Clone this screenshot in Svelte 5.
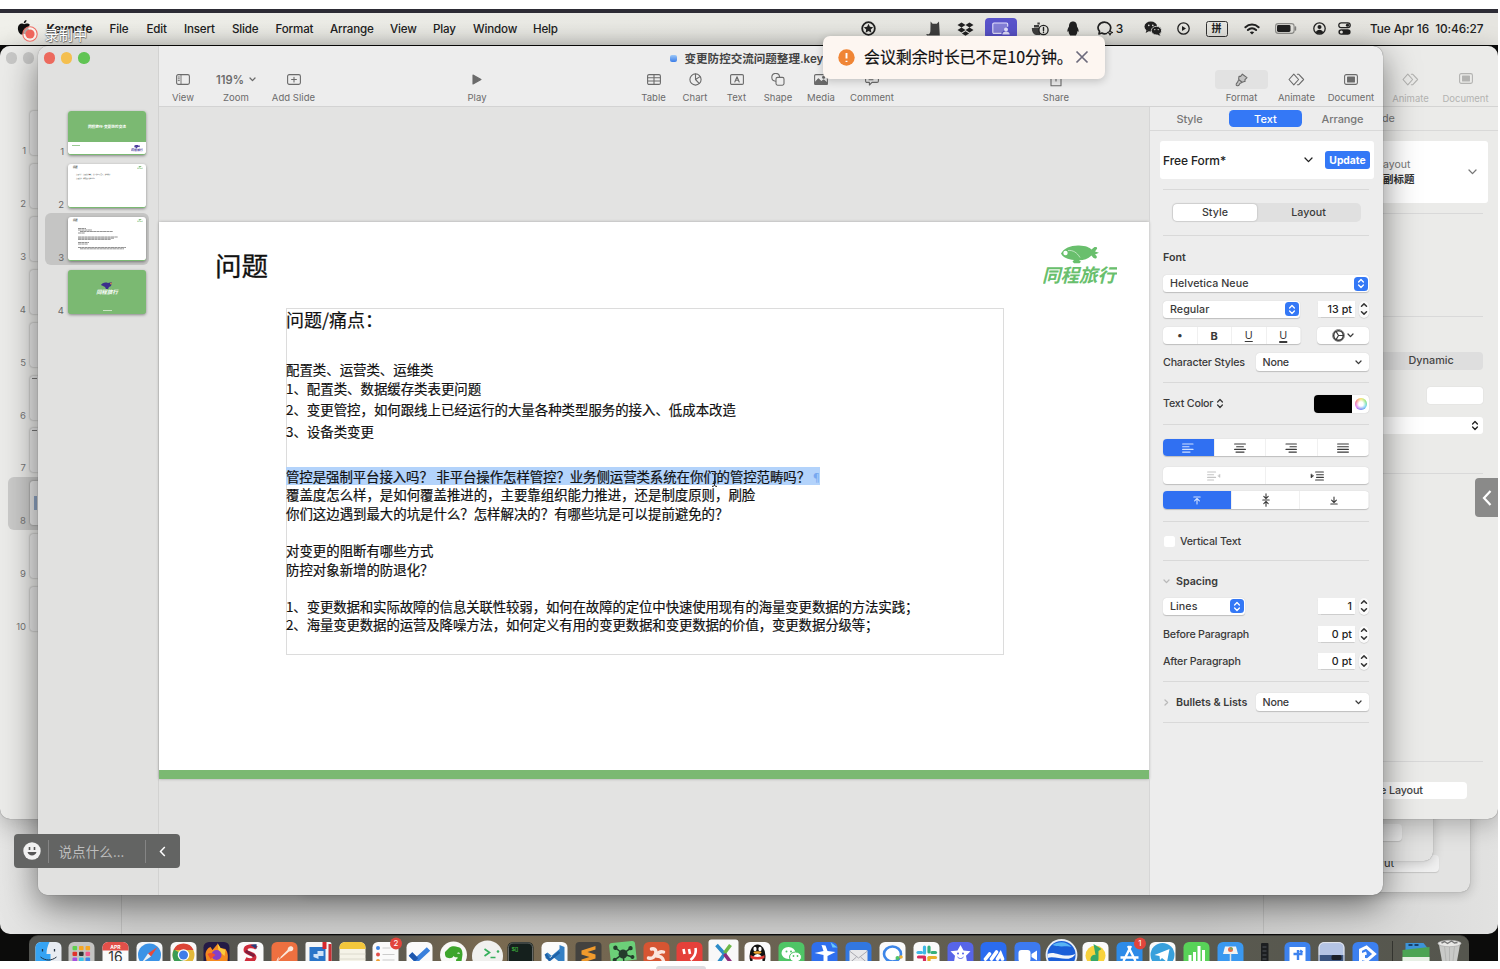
<script>
  const menus = ['Keynote', 'File', 'Edit', 'Insert', 'Slide', 'Format', 'Arrange', 'View', 'Play', 'Window', 'Help'];

  const ic = (w, h, body) =>
    `<svg width="${w}" height="${h}" viewBox="0 0 ${w} ${h}" fill="none" stroke="currentColor" stroke-width="1.1" stroke-linecap="round" stroke-linejoin="round" style="display:block">${body}</svg>`;

  const g = {
    view: ic(14, 11, '<rect x=".6" y=".6" width="12.8" height="9.8" rx="1.6"/><path d="M5 .8v9.4M2.2 3h1.2M2.2 4.8h1.2M2.2 6.6h1.2" stroke-width=".9"/>'),
    add: ic(14, 11, '<rect x=".6" y=".6" width="12.8" height="9.8" rx="1.6"/><path d="M7 3.2v4.8M4.6 5.5h4.8"/>'),
    play: ic(10, 11, '<path d="M1 1l8 4.5L1 10z" fill="currentColor"/>'),
    table: ic(14, 11, '<rect x=".6" y=".6" width="12.8" height="9.8" rx="1.4"/><path d="M.8 3.8h12.4M.8 7h12.4M7 .8v9.4"/>'),
    chart: ic(13, 13, '<circle cx="6.5" cy="6.5" r="5.6"/><path d="M6.5 1v5.5l3.6 3.8M6.5 6.5L11 3.6"/>'),
    text: ic(14, 11, '<rect x=".6" y=".6" width="12.8" height="9.8" rx="1.2"/><path d="M4.8 8L7 2.8 9.2 8M5.6 6.3h2.8"/>'),
    shape: ic(14, 13, '<path d="M4.6 8.2A3.9 3.9 0 1 1 8.6 4"/><rect x="5" y="4.4" width="8" height="7.8" rx="1.6"/>'),
    media: ic(14, 11, '<rect x=".6" y=".6" width="12.8" height="9.8" rx="1.2"/><path d="M1 8.6l3.4-3.8 3 3L9.600 6l3.600 3v1.200H1z" fill="currentColor"/><circle cx="9.600" cy="3.300" r="1" fill="currentColor"/>'),
    comment: ic(14, 12, '<path d="M2 .6h10a1.400 1.400 0 0 1 1.400 1.400v5A1.400 1.400 0 0 1 12 8.400H7L4.400 11V8.400H2A1.400 1.400 0 0 1 .6 7V2A1.400 1.400 0 0 1 2 .6zM4 3.600h6M4 5.800h4"/>'),
    share: ic(12, 14, '<path d="M3.600 5H1v7.800h10V5H8.400M6 8V1M3.800 3L6 1l2.200 2"/>'),
    format: ic(13, 14, '<path d="M7.400 1.200l4.600 3.400-2.200 2.200.4 1.400-3 1-3.600-2.800.4-3.200 1.600.2zM3.800 6.800l3.200 2.600M3.200 7.600C2.800 9.800.8 10.400 1.200 12c.6 1.400 2.800.8 3.200-.6.2-1 1-1.400 2-1.600" fill="#00000022"/>'),
    animate: ic(17, 13, '<path d="M5.800 1.200L1 6.500l4.800 5.300 4.800-5.300z"/><path d="M9.400 1.200h1.200l5 5.300-5 5.300H9.400" />'),
    document: ic(14, 11, '<rect x=".6" y=".6" width="12.8" height="9.8" rx="1.6"/><rect x="3.600" y="3" width="6.800" height="5" fill="currentColor"/>')
  };

  const tools = [
    ['view', 'View'], ['zoom', 'Zoom'], ['add', 'Add Slide'], ['play', 'Play'], ['table', 'Table'], ['chart', 'Chart'],
    ['text', 'Text'], ['shape', 'Shape'], ['media', 'Media'], ['comment', 'Comment'], ['share', 'Share'],
    ['format', 'Format'], ['animate', 'Animate'], ['document', 'Document']
  ];

  const chev = ic(9, 6, '<path d="M1 1l3.500 3.600L8 1" stroke-width="1.300"/>');
  const chevS = ic(7, 5, '<path d="M1 1l2.500 2.600L6 1" stroke-width="1.300"/>');
  const updown = ic(8, 11, '<path d="M1.600 4L4 1.500 6.400 4M1.600 7L4 9.500 6.400 7" stroke-width="1.300"/>');
  const stepIc = ic(8, 14, '<path d="M1.500 4.200L4 1.900l2.500 2.300M1.500 9.800L4 12.100l2.500-2.300" stroke-width="1.500"/>');

  const lines = (rows) => ic(12, 10, rows.map(([a, b], i) => `<path d="M${a} ${1 + i * 2.7}H${b}"/>`).join(''));
  const aligns = [
    lines([[0.6, 11], [0.6, 7], [0.6, 11], [0.6, 8]]),
    lines([[0.6, 11.4], [2.6, 9.4], [0.6, 11.4], [2, 10]]),
    lines([[1, 11.4], [5, 11.4], [1, 11.4], [4, 11.4]]),
    lines([[0.6, 11.4], [0.6, 11.4], [0.6, 11.4], [0.6, 11.4]])
  ];
  const outdent = ic(14, 10, '<path d="M.6 1h8M.6 3.700h6M.6 6.400h8M.6 9h6"/><path d="M13 3.500v3l-2-1.500z" fill="currentColor" stroke-width=".5"/>');
  const indent = ic(14, 10, '<path d="M5.600 1h7.800M6.600 3.700h6.800M6.600 6.400h6.800M5.600 9h7.800"/><path d="M1 3.300v3.600L3.400 5z" fill="currentColor" stroke-width=".6"/>');
  const vTop = ic(8, 9, '<path d="M.8 1h6.400M4 8V2.600M1.600 4.800L4 2.500l2.400 2.300"/>');
  const vMid = ic(8, 14, '<path d="M.8 7h6.400M4 .8v4.700M4 13.200V8.500M1.800 3.400L4 5.600l2.200-2.200M1.800 10.600L4 8.400l2.200 2.200"/>');
  const vBot = ic(8, 9, '<path d="M.8 8h6.400M4 1v5.400M1.600 4.200L4 6.500l2.400-2.300"/>');

  const F = 'fill="currentColor" stroke="none"';
  const status = [
    ic(15, 15, `<circle cx="7.500" cy="7.500" r="6.300" stroke-width="1.800"/><path d="M7.500 2.800l1.400 3 3.300.4-2.400 2.200.6 3.300-2.900-1.600-2.900 1.600.6-3.300L2.800 6.200l3.300-.4z" ${F}/>`),
    '',
    ic(15, 15, `<path d="M4.600.4l2 2.400h4.200L13 .4l.8 14.200H1L.2 13l2.600.2c1.400-1 1.600-2.400 1.600-4z" ${F} opacity=".85"/>`),
    ic(17, 14, `<path d="M4.500.5l4 2.500-4 2.500-4-2.500zM12.500.5l4 2.500-4 2.500-4-2.500zM4.500 5.600l4 2.500-4 2.500-4-2.500zM12.500 5.600l4 2.500-4 2.500-4-2.500zM8.500 9.200l3.600 2.300-3.600 2.200-3.600-2.200z" ${F}/>`),
    '<span class="sharing">' + ic(18, 13, `<path d="M9 11.400H2a1.200 1.200 0 0 1-1.200-1.200V2.200A1.200 1.200 0 0 1 2 1h12.500A1.200 1.200 0 0 1 15.700 2.200v2" fill="#ffffff44"/><circle cx="14" cy="7.500" r="2" ${F}/><path d="M10.300 12.600c0-4 7.400-4 7.400 0z" ${F}/>`) + '</span>',
    ic(18, 15, `<path d="M.8 7h8.500v7H5C2.400 13.500.8 11 .8 7zM3 4h5v2.400H3zM6.400 1.500h2.400v2H6.400z" ${F} opacity=".85"/><circle cx="12.500" cy="9" r="4.600" fill="#e9e9e4" stroke-width="1.300"/><path d="M12.500 6.500v3M12.500 11.300v.2" stroke-width="1.400"/>`),
    ic(12, 15, `<path d="M6 .6c3 0 4 2.200 4 4.800 1 1.600 1.800 3.400 1.600 5-.5.6-.9.2-1.300-.6.2 1.800-.3 3-1.500 4.600H3.200C2 12.800 1.500 11.600 1.700 9.800c-.4.8-.8 1.200-1.300.6C.2 8.800 1 7 2 5.400 2 2.800 3 .6 6 .6z" ${F}/>`),
    ic(17, 15, '<path d="M9.500 12.500c-1 .3-3.300.3-4.600-.5L2 13l.5-2.700C-.8 6.500 2 1.200 7.400 1.200c4.400 0 7.200 3.600 6 7" stroke-width="1.700"/><path d="M13 9l.8 1.700 1.700.8-1.700.8L13 14l-.8-1.700-1.700-.8 1.700-.8z" stroke-width="1.200"/>') + '<b>3</b>',
    ic(18, 15, `<ellipse cx="6.800" cy="5.600" rx="6.300" ry="5" ${F}/><path d="M2.500 9l-.8 3 3-1.800z" ${F}/><ellipse cx="12.500" cy="9.600" rx="5.200" ry="4.300" ${F} style="stroke:#e9e9e4;stroke-width:.8"/><path d="M15 12.500l1.500 2.200-3.500-1z" ${F}/><circle cx="4.800" cy="4.400" r=".8" fill="#e9e9e4" stroke="none"/><circle cx="8.800" cy="4.400" r=".8" fill="#e9e9e4" stroke="none"/><circle cx="10.800" cy="8.600" r=".7" fill="#e9e9e4" stroke="none"/><circle cx="14.200" cy="8.600" r=".7" fill="#e9e9e4" stroke="none"/>`),
    ic(13, 13, `<circle cx="6.500" cy="6.500" r="5.700" stroke-width="1.300"/><path d="M5 4l4 2.500L5 9z" ${F}/>`),
    '<span class="ime">拼</span>',
    ic(16, 12, `<path d="M1.400 4.300c3.800-3.600 9.400-3.600 13.200 0M3.900 7c2.400-2.200 5.800-2.200 8.200 0" stroke-width="2"/><path d="M8 11.600L5.800 9.200c1.300-1.100 3.100-1.100 4.400 0z" ${F}/>`),
    ic(22, 11, `<rect x=".6" y=".6" width="18.500" height="9.800" rx="2.600" opacity=".45"/><rect x="2" y="2" width="13.500" height="7" rx="1.400" ${F}/><path d="M20.500 4v3" stroke-width="1.400" opacity=".5"/>`),
    ic(13, 13, `<circle cx="6.500" cy="6.500" r="5.700" stroke-width="1.300"/><circle cx="6.500" cy="4.900" r="2" ${F}/><path d="M2.800 10.200c1-3.400 6.400-3.400 7.400 0-2 2-5.400 2-7.400 0z" ${F}/>`),
    ic(13, 13, `<rect x=".8" y=".8" width="11.400" height="4.800" rx="2.400" stroke-width="1.300"/><circle cx="9.500" cy="3.200" r="1.600" ${F}/><rect x=".4" y="7.200" width="12.200" height="5.600" rx="2.800" ${F}/><circle cx="3.400" cy="10" r="1.500" fill="#e9e9e4" stroke="none"/>`)
  ];

  const dk = (bg, body, r = 5.500) =>
    `<svg width="33" height="25" viewBox="-3.500 -6 33 25" style="display:block"><rect width="26" height="30" rx="${r}" fill="${bg}"/>${body}</svg>`;
  const badge = (n) => `<circle cx="23.500" cy="1.500" r="6" fill="#e2453c"/><text x="23.500" y="4.300" font-size="8" fill="#fff" text-anchor="middle">${n}</text>`;
  const dots = (cs) => cs.map((c, i) => `<rect x="${4 + (i % 3) * 6.500}" y="${4 + Math.floor(i / 3) * 5.800}" width="4.600" height="4.200" rx="1" fill="${c}"/>`).join('');
  const dock = [
    dk('#e8ecf2', '<path d="M5.500 0H14c-2 4-3 8-3 12h4v8H0V5.500A5.500 5.500 0 0 1 5.500 0z" fill="#35a3f3"/><path d="M7 7v2.500M19 7v2.500" stroke="#234" stroke-width="1.300"/><path d="M5 15c5 4 11 4 16 0" stroke="#234" fill="none"/>'),
    dk('#c4c4c2', dots(['#5fd04e', '#f5a623', '#f5a623', '#e0332c', '#333', '#f05a8c', '#a64fe0', '#3cc4e8', '#3c86e8'])),
    dk('#fafafa', '<path d="M0 8.500V5.500A5.500 5.500 0 0 1 5.500 0h15A5.500 5.500 0 0 1 26 5.500v3z" fill="#e2504a"/><text x="13" y="6.800" font-size="5" font-weight="700" fill="#fff" text-anchor="middle">APR</text><text x="13" y="20" font-size="14" fill="#333" text-anchor="middle">16</text>'),
    dk('#f4f6f8', '<circle cx="13" cy="13" r="11.500" fill="#3b93e6"/><path d="M21 5l-6.500 9.500-3-3z" fill="#e84a3c"/><path d="M5 21l6.500-9.500 3 3z" fill="#e8eef4"/>'),
    dk('#f8f8f8', '<circle cx="13" cy="13" r="11" fill="#e2b93a"/><path d="M3 8a11 11 0 0 1 20 0z" fill="#dc4437"/><path d="M3.500 7.500L13 13v11A11 11 0 0 1 3.500 7.500z" fill="#3b9c54"/><circle cx="13" cy="13" r="5.800" fill="#fff"/><circle cx="13" cy="13" r="4.500" fill="#3f7de8"/>'),
    dk('#241a45', '<path d="M2 13C2 9 4 6 7 5l2 3 5-6 3 4 5 1c2 3 3 6 2 12H3z" fill="#f58a20"/><path d="M14 1l3 5 5 2-1 6-6-5z" fill="#fccb3c"/><circle cx="13" cy="13" r="5" fill="#8440c8"/><path d="M4 12c3-2 6-1 8 1l-5 4z" fill="#f0502c"/>'),
    dk('#fafafa', '<path d="M19 6c-4-3-11-2-11 2s9 3 9 7-5 4-9 2" fill="none" stroke="#cf2b3a" stroke-width="4"/><path d="M13 3l6-1v5z" fill="#28407c"/><path d="M8 9l9 5" stroke="#7c1d3c" stroke-width="3"/>'),
    dk('#ee7040', '<path d="M20.500 4.500c2 1 1.500 3.500 0 4.500l-3 .5L10 16l-1-1 7-7 .5-2c1-1.500 2.500-2 4-1.500z" fill="#fbe8dc"/><path d="M10 15l-5 5M7 15.500L5 20" stroke="#fbe8dc"/>'),
    dk('#f5f5f5', '<rect x="4" y="5" width="16" height="15" fill="#2a74c8"/><rect x="17" y="0" width="4" height="7" fill="#d8282c"/><rect x="23" y="2" width="3" height="18" fill="#c83034"/><path d="M8 15v-3h4V9h6v5h-5v3z" fill="#cfe2f8"/>', 2),
    dk('#f5f3e8', '<path d="M0 7V5.500A5.500 5.500 0 0 1 5.500 0h15A5.500 5.500 0 0 1 26 5.500V7z" fill="#f3c73c"/><path d="M0 12h26M0 17h26" stroke="#d6d3c6" stroke-width=".8"/>'),
    dk('#fafafa', '<circle cx="5.500" cy="6" r="2" fill="#3c84e6"/><circle cx="5.500" cy="12.500" r="2" fill="#e2504a"/><circle cx="5.500" cy="19" r="2" fill="#f0a030"/><path d="M10 6h8M10 12.500h12M10 18h12" stroke="#ccc"/>' + badge(2)),
    dk('#fafafa', '<path d="M4 12l6 6L22 7" stroke="#3a80dc" stroke-width="5" fill="none"/><path d="M4 12l6 6" stroke="#1f57ac" stroke-width="5"/>'),
    `<svg width="33" height="25" viewBox="-3.500 -6 33 25" style="display:block"><circle cx="13" cy="13" r="13.500" fill="#f8f8f6"/><path d="M4.500 10L9 5.500c2-1.500 6-1.500 8-.5 4 .5 5 3.500 5 7.500l-1 7h-4c-2 0-2-2.500 0-3v-1.500c-1 .5-3 .5-4-1-1 3-6 2.500-7.500 1C4.500 14 4.300 12 4.500 10z" fill="#3da52c"/><path d="M16.500 11.500c.5-1.500 2.500-1.500 3 .3z" fill="#fff"/></svg>`,
    `<svg width="33" height="25" viewBox="-3.500 -6 33 25" style="display:block"><circle cx="13" cy="14" r="15.500" fill="#f0f0ee"/><path d="M10 7l5 3.500-5 3.500M16 15.500h5" stroke="#36b05c" stroke-width="1.700" fill="none"/><circle cx="23.500" cy="9.500" r="1.300" fill="#36b05c"/></svg>`,
    dk('#15201d', '<rect x="1" y="1" width="24" height="26" rx="4.500" fill="none" stroke="#888" stroke-width=".7"/><text x="4" y="9" font-size="6" font-weight="700" fill="#3cae3c" font-family="Liberation Mono">$▯</text>'),
    dk('#fafafa', '<path d="M18 3l5 2v15h-5L6 10.500 4 12v4l2 1.500L18 7z" fill="#3580c4"/><path d="M4 12l4 6 10-8" stroke="#1e62a8" stroke-width="2.500" fill="none"/>'),
    dk('#43423f', '<path d="M20 4L6 8.500v4l8 2.500-8 2.500V21l14-4.500v-4L12 10l8-2.500z" fill="#f09a2c"/>', 4),
    dk('#6ccf78', '<path d="M13 12L6 5M13 12l8-5M13 12L4 17M13 12l9 4M13 12v8" stroke="#243c2c" stroke-width="1.500"/><circle cx="13" cy="12" r="4.500" fill="#243c2c"/><circle cx="6" cy="5" r="2.200" fill="#243c2c"/><circle cx="21" cy="7" r="2.200" fill="#243c2c"/><circle cx="4" cy="17" r="2" fill="#243c2c"/><circle cx="22" cy="16" r="2" fill="#243c2c"/>', 3).replace('<svg ', '<svg class="tilt" '),
    dk('#d65532', '<path d="M8 7c4-1 5 2 4 5s-3 5-7 4M13 13c2-3 4-4 7-3M13 14c3 0 6 1 7 5" stroke="#fbe4dc" stroke-width="3.400" fill="none" stroke-linecap="round"/>'),
    dk('#e5403a', '<path d="M7 7l1 5M12.500 7l1 5M19 6c1 5-1 9-5 12" stroke="#fff" stroke-width="2.600" fill="none"/>'),
    `<svg width="33" height="25" viewBox="-3.500 -6 33 25" style="display:block"><rect x="-2" y="-2.500" width="30" height="32" rx="3" fill="#f8f8f8"/><path d="M6 3l8 9-7 10" stroke="#2d8cc8" stroke-width="3.600" fill="none"/><path d="M20 3l-6 8" stroke="#6cb848" stroke-width="3.600"/><path d="M14 12l6 8" stroke="#8c2c7c" stroke-width="3.600"/></svg>`,
    dk('#fafafa', '<ellipse cx="13" cy="14" rx="8" ry="11.500" fill="#111"/><ellipse cx="13" cy="18" rx="5" ry="6" fill="#fff"/><ellipse cx="10.500" cy="7" rx="1.600" ry="2.200" fill="#fff"/><ellipse cx="15.500" cy="7" rx="1.600" ry="2.200" fill="#fff"/><ellipse cx="13" cy="10.500" rx="4" ry="1.300" fill="#f4a72c"/><path d="M6 13c4 2.500 10 2.500 14 0v3c-4 2-10 2-14 0z" fill="#e23a34"/>'),
    dk('#4fc566', '<ellipse cx="10" cy="11" rx="7" ry="6" fill="#fff"/><ellipse cx="17" cy="15" rx="6" ry="5" fill="#fff" stroke="#4fc566"/><g fill="#4fc566"><circle cx="8" cy="9.500" r="1"/><circle cx="12.500" cy="9.500" r="1"/><circle cx="15" cy="14" r=".9"/><circle cx="19" cy="14" r=".9"/></g>'),
    dk('#2f6fee', '<path d="M10 3l4 .5 2 5.500 8 1-8 4v6h-4v-7l-9-2 9-2z" fill="#fff"/><path d="M19 0l7 5.500h-5z" fill="#6cc8f8"/>'),
    dk('#3277e0', '<rect x="4" y="8" width="18" height="14" rx="1.500" fill="#e8e8ea"/><path d="M4 9l9 7 9-7M4 21l7-6M22 21l-7-6" stroke="#a9a9b0" fill="none"/>'),
    dk('#fafafa', '<ellipse cx="13" cy="12" rx="8.500" ry="7.500" fill="#fff" stroke="#3d86e8" stroke-width="2.600"/><circle cx="18" cy="16" r="2" fill="#4fc566"/><circle cx="21.500" cy="15" r="1.800" fill="#f0b030"/>'),
    dk('#fafafa', '<g stroke-width="3.200" stroke-linecap="round"><path d="M11 5v6" stroke="#3cb8e8"/><path d="M4.500 10.500H8" stroke="#3cb8e8"/><path d="M15.500 5v5" stroke="#36b07c"/><path d="M18.500 10.500H22" stroke="#36b07c"/><path d="M5 15h6" stroke="#d82c5c"/><path d="M15.500 15.500H22" stroke="#e8b02c"/><path d="M11 16v5" stroke="#d82c5c"/><path d="M15.500 16v5" stroke="#e8b02c"/></g>'),
    dk('#5765e8', '<path d="M13 3l3 5.500 7 .8-4.500 4.500 1 6.200h-13l1-6.200L3 9.300l7-.8z" fill="#fff"/><circle cx="10.500" cy="11.500" r="1" fill="#5765e8"/><circle cx="15.500" cy="11.500" r="1" fill="#5765e8"/><path d="M10 15c2 2 4 2 6 0" stroke="#5765e8" fill="none"/>'),
    dk('#2b6cf0', '<path d="M5 17l4-5M11 17l5-7M17 17l3-5 2 5" stroke="#fff" stroke-width="3.600" fill="none" stroke-linecap="round"/>'),
    dk('#3d7af0', '<rect x="4" y="8" width="12" height="12" rx="3" fill="#fff"/><path d="M17 12l5.500-3.500v10L17 15z" fill="#fff"/>'),
    `<svg width="33" height="25" viewBox="-3.500 -6 33 25" style="display:block"><circle cx="13" cy="13" r="15" fill="#1b5fd8" stroke="#e8eef4" stroke-width="1.800"/><path d="M-1 12c8-4 14 5 28 0-6 10-20 1-28 4z" fill="#f2f6fa"/><path d="M4 3c6-4 14-4 19 2-5-2-10 1-19-2z" fill="#58b4f4"/></svg>`,
    dk('#fafafa', '<circle cx="13" cy="13.500" r="10" fill="#f8d23c"/><path d="M11 2l8 5-3 2v8a4 4 0 1 1-3-4z" fill="#36a868"/>'),
    dk('#2d8be8', '<path d="M14.500 4L7 19M11.500 4L19 19M4 15.500h18" stroke="#fff" stroke-width="2.400"/>' + badge(1)),
    dk('#fafafa', '<circle cx="13" cy="13" r="12" fill="#38a0dc"/><path d="M5 13l15-6-2.500 13-5-4-2 2-.5-4z" fill="#fff"/>'),
    dk('#58d258', '<path d="M6.500 13v8M11 10v10M15.500 4v16M20 8v12" stroke="#fff" stroke-width="3"/>'),
    dk('#3a98f0', '<path d="M7.500 4.500h11L20.500 12h-15z" fill="#f2f2f2"/><circle cx="13" cy="7.500" r="2.500" fill="#e86c4c"/><path d="M13 7.500V5a2.500 2.500 0 0 1 2.400 2.500z" fill="#5cb85c"/><path d="M13 11.500V20" stroke="#e4e4e4" stroke-width="1.500"/>'),
    `<svg width="33" height="25" viewBox="-3.500 -6 33 25" style="display:block"><rect x="9.500" y="1" width="7.500" height="25" rx="1" fill="#1c1e20"/><path d="M11 5h4M11 9h4M11 13h4M11 17h4" stroke="#50545a"/></svg>`,
    dk('#3d82ee', '<path d="M5 5h16v16H5z" fill="#fff"/><path d="M13.500 8v10M9 12h9M15.500 8.500l2.500 2" stroke="#3d82ee" stroke-width="2.400" fill="none"/>'),
    dk('#b4c4e4', '<path d="M0 13h26v8H0z" fill="#3a5480"/><rect x="13" y="13" width="10" height="5" rx="1.500" fill="#1c2028"/><rect x=".6" y=".6" width="24.800" height="30" rx="5" fill="none" stroke="#e4e6ea"/>'),
    dk('#3c80f0', '<path d="M8 19V8l6-3 8 7-7 6-4-1v-5l3-1" fill="none" stroke="#fff" stroke-width="3"/>')
  ];

  const backNumbers = [1, 2, 3, 4, 5, 6, 7, 8, 9, 10];
</script>

{#snippet logo(w, c)}
  <svg class="logo" width={w} viewBox="0 0 74 42">
    <path d="M18 8.500C21 3 28 .2 36 .5c7 .3 10.500 2 12.500 4l3-2.500c2-.4 3 .4 2.500 1.800L52 6.500l4 1.300L52 9.500c2 1.500 2.500 3 1 4-2 .4-3-.8-4.500-3-3.500 3.500-8 4.800-12 4.800h-.5l2 1.500-1.500 1.500h-5.500L29.500 16.500l1.500-1.400C24.500 14.500 19.500 12 18 8.500z" fill={c} />
    <circle cx="22.500" cy="8" r="2.200" fill="#fff" />
    <path d="M25 5.500c5-.5 9 2 12 7" stroke="#fff" fill="none" stroke-width=".8" opacity=".7" />
    <text x="36" y="37" font-size="18.500" font-weight="700" font-style="italic" text-anchor="middle" fill={c}>同程旅行</text>
  </svg>
{/snippet}

<div class="screen">
  <header class="menubar">
    <svg class="apple" width="13" height="15" viewBox="0 0 13 15"><path d="M9 0c.2 1.600-1.200 3.200-2.700 3.200C6.100 1.700 7.500.2 9 0zM6.600 4.200C7.400 4.200 8.400 3.400 9.700 3.500c1 0 2 .5 2.700 1.400-2.400 1.500-2 4.700.5 5.700-.6 1.700-2 4-3.400 4-.9 0-1.300-.6-2.600-.6s-1.700.6-2.600.6C2.300 14.500.2 11 .4 8c.2-3 2-4.500 3.900-4.500.9 0 1.800.7 2.300.7z" /></svg>
    <nav>
      {#each menus as m}<span>{m}</span>{/each}
    </nav>
    <div class="status">
      {#each status as s}<span>{@html s}</span>{/each}
    </div>
    <time>Tue Apr 16&nbsp; 10:46:27</time>
  </header>

  <div class="recording">
    <svg width="16" height="16" viewBox="0 0 16 16"><circle cx="8" cy="8" r="7.200" fill="#fff6f2aa" stroke="#ee6f66" stroke-width="1.100" /><circle cx="8" cy="8" r="4.600" fill="#ee655c" /></svg>
    <span>录制中</span>
  </div>

  <section class="win deep"><i></i><i></i></section>
  <section class="win mid-a"><span class="pill">ut</span></section>
  <section class="win mid-b"><span class="pill"></span></section>

  <section class="win back">
    <div class="lights"><i></i><i></i></div>
    <ol class="back-slides">
      {#each backNumbers as n}
        <li class:on={n === 8}><span>{n}</span><i>{#if n === 6 || n === 7}<em></em>{/if}{#if n === 8}<u></u>{/if}</i></li>
      {/each}
    </ol>
    <div class="back-side">
      <div class="back-tools">
        <div>{@html g.animate}<span>Animate</span></div>
        <div>{@html g.document}<span>Document</span></div>
      </div>
      <div class="back-tab">de</div>
      <div class="back-card"><p>ayout<b>副标题</b></p>{@html chev}</div>
      <hr class="m1" />
      <hr class="m2" />
      <div class="dyn">Dynamic</div>
      <div class="blank"></div>
      <div class="pick">{@html updown}</div>
      <hr class="m3" />
      <hr class="m4" />
      <div class="edit">e Layout</div>
    </div>
  </section>

  <section class="win main">
    <aside class="slides">
      <div class="lights"><i class="r"></i><i class="y"></i><i class="g"></i></div>
      <ol>
        <li><span>1</span>
          <div class="thumb cover"><b>同程旅行·变更防控交流</b><div><em></em>{@render logo(12, '#4a3a9c')}</div></div></li>
        <li><span>2</span>
          <div class="thumb"><div class="bar"><b>问题</b>{@render logo(6, '#7bbb72')}</div>
            <p>变更流程，变更防控建设，核心指标及定义，落地推进<br /><br />变更防控，如何跟进落地执行</p></div></li>
        <li class="on"><span>3</span>
          <div class="thumb"><div class="bar"><b>问题</b>{@render logo(6, '#7bbb72')}</div>
            <svg width="78" height="36" viewBox="0 0 78 36" stroke="#333" stroke-width=".8" opacity=".65"><path d="M10 -.5h6M10 3.500h8M10 5h14M12 6.500h33M10 8h7M10 12h40M10 13.200h36M10 14.400h33M10 17.500h11M10 19h10M10 22.500h48M12 23.800h44" stroke-dasharray="3 .3" /></svg></div></li>
        <li><span>4</span><div class="thumb end"><svg width="12" height="7" viewBox="0 0 12 7"><path d="M0 3C1 1 4 0 7 1l4-1-1 4-2 1-1 2H5L4 5z" fill="#3c2f8c" /><path d="M9 1l2-.5L10 3z" fill="#f0a040" /></svg><b>同程旅行</b><em></em></div></li>
      </ol>
    </aside>

    <div class="right">
      <div class="title"><i></i>变更防控交流问题整理.key</div>
      <div class="toolbar">
        {#each tools as [k, label]}
          <div class="tool {k}">
            <div class="glyph">{#if k === 'zoom'}<b>119%</b>{@html chevS}{:else}{@html g[k]}{/if}</div>
            <span>{label}</span>
          </div>
        {/each}
      </div>
      <div class="body">
        <main class="canvas">
          <article class="slide">
            <header><h1>问题</h1>{@render logo(74, '#69bf6d')}</header>
            <div class="textbox">
              <h2>问题/痛点：</h2>
              <p>配置类、运营类、运维类</p>
              <p>1、配置类、数据缓存类表更问题</p>
              <p class="sp">2、变更管控，如何跟线上已经运行的大量各种类型服务的接入、低成本改造</p>
              <p class="sp">3、设备类变更</p>
              <p class="sel"><span>管控是强制平台接入吗？<s></s>非平台操作怎样管控？业务侧运营类系统在你们的管控范畴吗？<i>¶</i></span>
                <svg class="caret" width="7" height="14" viewBox="0 0 7 14" fill="none" stroke="#222"><path d="M1 .6c1.500 0 2.500.5 2.500 1.500v9.800c0 1-1 1.500-2.500 1.500M6 .6C4.500.6 3.500 1.100 3.500 2.100M6 13.400c-1.500 0-2.500-.5-2.500-1.500M2 9h3" /></svg></p>
              <p>覆盖度怎么样，是如何覆盖推进的，主要靠组织能力推进，还是制度原则，刷脸</p>
              <p>你们这边遇到最大的坑是什么？怎样解决的？有哪些坑是可以提前避免的？</p>
              <p class="gap">对变更的阻断有哪些方式</p>
              <p>防控对象新增的防退化？</p>
              <p class="gap tight">1、变更数据和实际故障的信息关联性较弱，如何在故障的定位中快速使用现有的海量变更数据的方法实践；</p>
              <p class="tight">2、海量变更数据的运营及降噪方法，如何定义有用的变更数据和变更数据的价值，变更数据分级等；</p>
            </div>
          </article>
        </main>

        <aside class="inspector">
          <div class="tabs"><span>Style</span><span class="on">Text</span><span>Arrange</span></div>
          <div class="stylebox"><span>Free Form*</span>{@html chev}<button>Update</button></div>
          <hr />
          <div class="row seg-row"><div class="seg"><span class="on">Style</span><span>Layout</span></div></div>
          <hr />
          <div class="row pt8"><b>Font</b></div>
          <div class="row"><div class="field grow">Helvetica Neue<i class="blue">{@html updown}</i></div></div>
          <div class="row"><div class="field w137">Regular<i class="blue">{@html updown}</i></div>
            <div class="num">13 pt</div><div class="step">{@html stepIc}</div></div>
          <div class="row"><div class="btns w138"><span>•</span><span class="bb">B</span><span><u>U</u></span><span><u class="thick">U</u></span></div>
            <div class="gear">{@html ic(13, 13, '<circle cx="6.500" cy="6.500" r="4.800" stroke-width="1.500"/><path d="M6.500 6.500h4.200M6.500 6.500L4.200 2.600M6.500 6.500L4.200 10.400" stroke-width="1.100"/><circle cx="6.500" cy="6.500" r="5.900" stroke-width=".7" stroke-dasharray="1 1"/>')}{@html chevS}</div></div>
          <div class="row pb8"><span class="lbl">Character Styles</span><div class="field none">None{@html chevS}</div></div>
          <hr />
          <div class="row"><span class="lbl">Text Color</span><span class="ud">{@html updown}</span><div class="swatch"><i></i><em></em></div></div>
          <hr />
          <div class="row pt10"><div class="btns grow al">{#each aligns as a, i}<span class:on={i === 0}>{@html a}</span>{/each}</div></div>
          <div class="row"><div class="btns grow"><span class="dim">{@html outdent}</span><span>{@html indent}</span></div></div>
          <div class="row pb12"><div class="btns grow"><span class="on">{@html vTop}</span><span>{@html vMid}</span><span>{@html vBot}</span></div></div>
          <hr />
          <div class="row"><i class="check"></i><span class="lbl">Vertical Text</span></div>
          <hr />
          <div class="row pt8"><i class="tw">{@html chevS}</i><b>Spacing</b></div>
          <div class="row"><div class="field w81">Lines<i class="blue">{@html updown}</i></div><div class="num">1</div><div class="step">{@html stepIc}</div></div>
          <div class="row"><span class="lbl">Before Paragraph</span><div class="num">0 pt</div><div class="step">{@html stepIc}</div></div>
          <div class="row pb9"><span class="lbl">After Paragraph</span><div class="num">0 pt</div><div class="step">{@html stepIc}</div></div>
          <hr />
          <div class="row"><i class="tw side">{@html chevS}</i><b>Bullets &amp; Lists</b><div class="field none">None{@html chevS}</div></div>
          <hr />
        </aside>
      </div>
    </div>
  </section>

  <div class="toast">
    <svg width="17" height="17" viewBox="0 0 17 17"><circle cx="8.500" cy="8.500" r="8.200" fill="#f08535" /><path d="M8.500 4v5.400M8.500 11.700v1.300" stroke="#fff" stroke-width="1.900" /></svg>
    <span>会议剩余时长已不足10分钟。</span>
    <svg width="14" height="14" viewBox="0 0 14 14"><path d="M1.500 1.500l11 11M12.500 1.500l-11 11" stroke="#6d6a7c" stroke-width="1.700" /></svg>
  </div>

  <div class="expander"><svg width="12" height="18" viewBox="0 0 12 18"><path d="M9.500 2L3 9l6.500 7" fill="none" stroke="#fff" stroke-width="2.200" /></svg></div>

  <div class="chat">
    <svg width="18" height="18" viewBox="0 0 18 18"><circle cx="9" cy="9" r="8.700" fill="#f1f1f1" /><path d="M6.500 5v3M11.500 5v3" stroke="#555" stroke-width="1.600" /><path d="M4.500 10c1 4.500 8 4.500 9 0z" fill="#555" /></svg>
    <i></i><span>说点什么...</span><i></i>
    <svg width="7" height="11" viewBox="0 0 7 11"><path d="M5.800 1L1.500 5.500 5.800 10" fill="none" stroke="#fff" stroke-width="1.500" /></svg>
  </div>

  <footer class="dock">
    {#each dock as d}<span>{@html d}</span>{/each}
    <i></i>
    <span><svg width="33" height="25" viewBox="-3.500 -6 33 25"><path d="M3 1h18l4 5v7H3z" fill="#3c94d8" /><path d="M6 3h4M12 3h4" stroke="#18406c" stroke-width="2" /><path d="M0 8l27-3v14H0z" fill="#4ca454" /><path d="M0 15h27v5H0z" fill="#e8f0e6" /></svg></span>
    <span><svg width="33" height="25" viewBox="-3.500 -6 33 25"><path d="M2 0h22l-4 22H6z" fill="#c9cac8" /><path d="M8 4l1.500 15M13 4v15M18 4l-1.500 15" stroke="#b4b5b3" /><ellipse cx="13" cy="1.500" rx="11.500" ry="3.200" fill="#e8e8e6" stroke="#aaa" stroke-width=".7" /><path d="M5 1l3-1.500 3 2 4-2.500 3 2 3-.5" stroke="#777" stroke-width="1.400" fill="none" /></svg></span>
  </footer>
</div>
<div class="handle"></div>

<style>
  :global(body) { background: #fff; }
  :global(#app) { position: relative; width: 1500px; height: 969px; overflow: hidden; font-family: Inter, 'Noto Sans CJK SC', sans-serif; }
  * { box-sizing: border-box; }
  i, em { font-style: normal; display: block; }
  ol { list-style: none; margin: 0; padding: 0; }
  p, h1, h2 { margin: 0; }
  hr { border: 0; height: 1px; background: #d9d9d9; margin: 0; }

  .screen { position: absolute; left: 0; top: 9px; width: 1498px; height: 952px; background: #0c0c0b; overflow: hidden; color: #333; }
  .menubar { height: 36px; border-top: 4px solid #2d2c35; background: linear-gradient(90deg, #f0f0ea, #e8e8e3 55%, #e6e5e0); display: flex; align-items: center; color: #222; }
  .apple { margin-left: 17px; width: 14px; margin-top: -4px; fill: #111; }
  nav { display: grid; grid-template-columns: 63px 37px 37.500px 48px 43.500px 54.500px 60px 43px 40px 60px 40px; margin-left: 15.500px; font-size: 11.600px; font-weight: 500; letter-spacing: -.17px; white-space: nowrap; }
  nav span:first-child { font-weight: 700; }
  .status { margin-left: 277px; display: grid; grid-template-columns: 36px 34px 26px 39px 32px 46px 20px 54px 31px 30px 37px 34px 34px 32px 18px; height: 32px; }
  .status > span { display: flex; align-items: center; justify-content: center; font-size: 12px; gap: 2px; margin-top: -1px; }
  .status :global(b) { font-weight: 500; }
  .status :global(.sharing) { width: 32px; height: 21px; border-radius: 4px; background: #5a54cc; color: #e6e4ff; display: flex; align-items: center; justify-content: center; }
  .status :global(.ime) { width: 20px; height: 14px; border: 1.300px solid #333; border-radius: 2.500px; font: 700 10px/11px 'Noto Sans CJK SC', sans-serif; text-align: center; }
  time { margin-left: 17px; font-size: 11.800px; font-weight: 500; letter-spacing: -.07px; white-space: nowrap; }

  .recording { position: absolute; z-index: 2; left: 21.500px; top: 17px; display: flex; align-items: center; gap: 7px; height: 16px; }
  .recording span { font-size: 14.200px; line-height: 16px; color: #fff; padding-top: 2px; text-shadow: 0 0 1px #666, .5px .5px 1px #666, 0 0 1px #888; }

  .win { position: absolute; overflow: hidden; }
  .deep { left: 0; top: 37px; width: 1498px; height: 888px; border-radius: 10px; background: linear-gradient(90deg, #e6e6e5, #cfcfce 9%, #cacac9 80%, #d6d6d5 90%, #e2e2e1); }
  .deep i { position: absolute; left: 121px; bottom: 0; width: 1px; height: 50px; background: #bdbdbc; }
  .deep i + i { left: 1263px; }
  .mid-a { left: 300px; top: 500px; width: 1170px; height: 383px; border-radius: 9px; background: #e3e3e2; box-shadow: 0 2px 12px #0003, 0 0 1px #0006; }
  .mid-b { left: 300px; top: 500px; width: 1133px; height: 352px; border-radius: 9px; background: #e2e2e1; box-shadow: 0 2px 12px #0003, 0 0 1px #0006; }
  .pill { position: absolute; right: 31px; bottom: 20px; width: 100px; height: 17px; border-radius: 4px; background: #f0f0f0; font-size: 11px; line-height: 17px; padding-left: 45px; box-shadow: 0 1px 1px #0002; }

  .back { left: 0; top: 37px; width: 1498px; height: 773px; border-radius: 10px; background: #ebebe9; box-shadow: 0 5px 26px #0004, 0 0 1px #0008; display: flex; justify-content: space-between; }
  .lights { display: flex; gap: 6px; height: 24px; align-items: center; padding-left: 6px; }
  .lights i { width: 11.200px; height: 11.200px; border-radius: 50%; background: #c8c8c7; }
  .back > .lights { position: absolute; left: 0; top: 0; }
  .back-slides { width: 38px; padding-top: 61px; }
  .back-slides li { height: 52.850px; margin-left: 8px; display: flex; justify-content: flex-end; align-items: center; }
  .back-slides li.on { background: #cbcbca; border-radius: 6px 0 0 6px; }
  .back-slides span { font-size: 9.500px; color: #777; margin-right: 4px; padding-top: 35px; }
  .back-slides i { width: 8px; height: 44px; border-radius: 3px 0 0 3px; background: #e9e9e9; box-shadow: 0 0 2px #0006; }
  .back-slides em { width: 5px; height: 1px; margin: 2px 0 0 2px; background: #777; }
  .back-slides u { display: block; width: 3px; height: 14px; margin: 15px 0 0 4px; background: #8fa5c4; }
  .back-side { width: 115px; display: flex; flex-direction: column; font-size: 10.800px; color: #444; }
  .back-tools { display: flex; height: 61px; padding-top: 27px; color: #b3b3b1; border-bottom: 1px solid #d4d4d3; font-size: 9.500px; }
  .back-tools div { width: 55px; height: 31px; display: flex; flex-direction: column; align-items: center; justify-content: space-between; }
  .back-tab { height: 24px; line-height: 24px; color: #777; border-bottom: 1px solid #d9d9d8; text-indent: -1px; }
  .back-card { margin: 10px 10px 0 0; height: 62px; background: #fff; border-radius: 0 3px 3px 0; display: flex; align-items: center; justify-content: space-between; padding-right: 11px; color: #777; }
  .back-card b { display: block; color: #333; margin-top: 1px; }
  .back-card p { line-height: 14px; font-size: 10.500px; }
  .m1 { margin: 10px 15px 0 0; } .m2 { margin: 102px 15px 0 0; } .m3 { margin: 39px 15px 0 0; } .m4 { margin: 287px 15px 0 0; }
  .dyn { margin: 35px 15px 0 0; height: 18px; line-height: 18px; background: #dedede; border-radius: 0 4px 4px 0; padding-left: 25.500px; font-weight: 500; }
  .blank { margin: 17px 15px 0 auto; width: 56px; height: 17px; border-radius: 3px; background: #fff; box-shadow: 0 0 1px #0003; }
  .pick { margin: 13px 15px 0 0; height: 17px; border-radius: 0 3px 3px 0; background: #fff; display: flex; align-items: center; justify-content: flex-end; padding-right: 4px; color: #222; }
  .edit { margin: 20px 31px 0 0; height: 17px; line-height: 17px; border-radius: 0 4px 4px 0; background: #fff; font-weight: 500; white-space: nowrap; text-indent: -3px; letter-spacing: -.15px; }

  .main { left: 38px; top: 37px; width: 1345px; height: 849px; border-radius: 10px; display: flex; background: #ededed; box-shadow: 0 10px 34px rgba(0,0,0,.5), 0 0 1px #0009; }
  .slides { width: 121px; background: #e1e1e0; border-right: 1px solid #d2d2d1; }
  .slides ol { padding-top: 37px; }
  .slides li { height: 52px; margin: 0 9px 1px 7px; display: flex; justify-content: flex-end; align-items: center; border-radius: 6px; padding-right: 3px; }
  .slides li.on { background: #c5c5c4; }
  .slides li > span { font-size: 9.500px; color: #666; padding-top: 36px; margin-right: 4px; }
  .r { background: #ec6a5e !important; } .y { background: #f4bf4f !important; } .g { background: #61c454 !important; }
  .thumb { width: 78px; height: 44px; border-radius: 3px; background: #fff; border-bottom: 1px solid #7bb972; box-shadow: 0 1px 3px #0006; overflow: hidden; flex: none; }
  .thumb b { display: block; }
  .thumb .bar { height: 8px; padding: 2px 3px 0 5px; display: flex; justify-content: space-between; }
  .thumb .bar b { font-size: 2.300px; line-height: 4px; }
  .thumb p { font-size: 1.450px; line-height: 2.200px; padding: 2px 8px; color: #333; white-space: nowrap; }
  .cover b { height: 31px; background: #7bb972; color: #fff; font-size: 3.700px; line-height: 31px; text-align: center; }
  .cover > div { display: flex; justify-content: space-between; padding: 3px 3px 0 4px; }
  .cover em { width: 8px; height: .8px; background: #9bc994; }
  .end { background: #7bb972; display: flex; flex-direction: column; align-items: center; padding-top: 12px; color: #fff; }
  .end b { font-size: 5.400px; font-style: italic; line-height: 7px; }
  .end em { margin-top: 14px; width: 9px; height: 1px; background: #c9e3c4; }

  .right { flex: 1; display: flex; flex-direction: column; }
  .title { height: 24px; display: flex; align-items: center; padding-left: 511px; font-size: 11.600px; font-weight: 600; color: #444; letter-spacing: -.05px; }
  .title i { width: 7px; height: 7px; border-radius: 2px; background: linear-gradient(#9cc8f8, #3b7de8); margin-right: 7.500px; }
  .toolbar { height: 37px; border-bottom: 1px solid #d3d3d3; display: grid; grid-template-columns: 48px 58px 57px 310px 43px 40px 43px 40px 46px 56px 312px 59px 51px 58px; color: #6b6b6b; }
  .tool { display: flex; flex-direction: column; align-items: center; font-size: 9.500px; white-space: nowrap; }
  .tool span { line-height: 12px; margin-top: 3px; letter-spacing: .05px; }
  .glyph { height: 19px; display: flex; align-items: center; justify-content: center; gap: 5px; }
  .glyph b { font-size: 11.200px; font-weight: 600; }
  .format .glyph { width: 53px; background: #e2e2e2; border-radius: 4px; }
  .body { flex: 1; display: flex; }

  .canvas { width: 990px; background: #e3e3e2; padding-top: 115px; }
  .slide { height: 557px; background: #fff; border-bottom: 9px solid #7bb972; box-shadow: 0 0 3px #0004; font-family: 'Noto Sans CJK SC', sans-serif; color: #111; }
  .slide > header { height: 86px; display: flex; justify-content: space-between; padding: 23px 32px 0 56px; }
  h1 { font-size: 26.600px; font-weight: 400; line-height: 40px; -webkit-text-stroke: .3px #111; }
  .logo { display: block; flex: none; align-self: flex-start; }
  .textbox { margin-left: 127px; width: 718px; height: 347px; border: 1px solid #dcdcdc; white-space: nowrap; font-size: 13.420px; line-height: 18.600px; -webkit-text-stroke: .2px #111; }
  .textbox p { height: 18.600px; margin-left: -1px; }
  h2 { font-size: 18px; font-weight: 400; line-height: 24px; height: 24px; margin: -2px 0 29px -1px; }
  .textbox .sp { margin-top: 2.900px; }
  .textbox .sel { margin-top: 26.500px; position: relative; }
  .sel span { display: inline-block; height: 18.600px; background: #b3d3fb; width: 534px; letter-spacing: -.06px; }
  .sel s { display: inline-block; width: 3.500px; }
  .sel i { display: inline; color: #76a8f0; font-size: 11px; margin-left: 1px; -webkit-text-stroke: 0; }
  .caret { position: absolute; left: 425px; top: 6px; }
  .textbox .gap { margin-top: 18.600px; }
  .textbox .tight { letter-spacing: -.11px; }

  .inspector { width: 234px; border-left: 1px solid #d6d6d6; display: grid; align-content: start; font-size: 10.700px; font-weight: 500; color: #3a3a3a; letter-spacing: .05px;
    grid-template-rows: 24px 58px 1px 45px 1px 34px 27px 24px 29px 32px 1px 41px 1px 35px 31px 30px 1px 38px 1px 33px 24px 32px 31px 1px 40px 1px; }
  .inspector hr { margin: 0 14px 0 13px; }
  .tabs { display: grid; grid-template-columns: 79px 73px 81px; align-items: center; text-align: center; color: #777; font-size: 11px; border-bottom: 1px solid #d9d9d9; }
  .tabs span:last-child, .tabs span:first-child { letter-spacing: -.1px; }
  .tabs .on { background: #3478f6; color: #fff; border-radius: 4.500px; height: 17.500px; line-height: 18px; }
  .stylebox { margin: 10px 9px 10px 10px; background: #fff; border-radius: 3px; display: flex; align-items: center; padding: 0 4px 0 3px; font-size: 12px; color: #222; }
  .stylebox span { flex: 1; letter-spacing: -.1px; }
  button { margin-left: 12px; width: 45px; height: 18px; border: 0; border-radius: 3px; background: #3478f6; color: #fff; font: 700 10.300px Inter, sans-serif; padding: 0; }
  .row { display: flex; align-items: center; padding: 0 14px 0 13px; white-space: nowrap; min-width: 0; }
  .row b { font-weight: 600; letter-spacing: -.03px; }
  .lbl { letter-spacing: -.21px; }
  .pt8 { padding-top: 8px; } .pb8 { padding-bottom: 8px; } .pt10 { padding-top: 10px; } .pb12 { padding-bottom: 12px; } .pb9 { padding-bottom: 9px; }
  .seg { margin-left: 9px; width: 189px; height: 19px; border-radius: 5px; background: #e0e0e0; display: flex; align-items: center; text-align: center; padding: 1px; }
  .seg span { flex: 1; line-height: 17px; }
  .seg .on { flex: none; width: 84px; padding: 0; background: #fff; border-radius: 4px; box-shadow: 0 0 2px #0004; }
  .field { height: 17px; border-radius: 3.500px; background: #fff; box-shadow: 0 .5px 1px #0003; display: flex; align-items: center; justify-content: space-between; padding: 0 1.500px 0 7px; }
  .grow { flex: 1; } .w137 { width: 137px; } .w138 { width: 138px; } .w81 { width: 82px; }
  .blue { width: 13.500px; height: 14px; border-radius: 3.500px; background: #3478f6; color: #fff; display: flex; align-items: center; justify-content: center; }
  .num { margin-left: auto; width: 37px; height: 16px; line-height: 17px; background: #fff; text-align: right; padding-right: 3px; color: #222; box-shadow: 0 .5px 1px #0002; }
  .step { margin-left: 4px; width: 10px; height: 17px; border-radius: 5px; background: #fafafa; color: #333; display: flex; align-items: center; justify-content: center; box-shadow: 0 .5px 1px #0003; }
  .btns { height: 17.500px; border-radius: 4px; background: #fff; display: flex; overflow: hidden; box-shadow: 0 .5px 1px #0003; }
  .btns span { flex: 1; display: flex; align-items: center; justify-content: center; border-right: 1px solid #f0f0f0; }
  .btns .on { background: #3070f2; color: #cfe0ff; }
  .btns .dim { color: #c4c4c4; }
  .btns .bb { font-weight: 700; font-size: 11px; }
  .btns u { text-underline-offset: 1.500px; font-weight: 400; }
  .btns .thick { text-decoration-thickness: 1.500px; }
  .gear { margin-left: auto; width: 52px; height: 17.500px; border-radius: 4px; background: #fff; box-shadow: 0 .5px 1px #0003; display: flex; align-items: center; justify-content: center; gap: 2px; }
  .none { margin-left: auto; width: 113px; padding: 0 7px 0 6.500px; height: 17.500px; letter-spacing: -.2px; }
  .ud { margin-left: 3px; }
  .swatch { margin-left: auto; width: 55px; height: 18px; display: flex; border-radius: 4px; overflow: hidden; background: #fff; align-items: center; box-shadow: 0 0 1px #0004; }
  .swatch i { width: 38px; height: 18px; background: #000; }
  .swatch em { width: 12px; height: 12px; margin-left: 3px; border-radius: 50%; background: radial-gradient(#fff 25%, #fff0 75%), conic-gradient(#f5e04c, #6de06a, #4cc8f0, #5c6cf0, #d85cf0, #f05c6c, #f5e04c); }
  .check { width: 11px; height: 11px; border-radius: 2.500px; background: #fff; margin: 0 5.500px 0 .5px; }
  .tw { width: 7px; margin: 0 6px 0 0; color: #b9b9b9; }
  .side { transform: rotate(-90deg); }

  .toast { position: absolute; left: 823px; top: 26.500px; width: 282px; height: 43px; border-radius: 7px; background: #fdf6f1; box-shadow: 0 2px 8px #0003; display: flex; align-items: center; padding-left: 14.500px; color: #111; }
  .toast span { margin: -2px 5px 0 9.500px; width: 205.500px; font-family: 'Noto Sans CJK SC', sans-serif; font-size: 16px; letter-spacing: -.07px; white-space: nowrap; -webkit-text-stroke: .2px #111; }
  .expander { position: absolute; right: 0; top: 469px; width: 23px; height: 39px; border-radius: 4px 0 0 4px; background: #8a8a89; display: flex; align-items: center; justify-content: center; }
  .chat { position: absolute; left: 14px; top: 825px; width: 166px; height: 34px; border-radius: 4px; background: #636463; display: flex; align-items: center; padding-left: 9px; color: #bdbdbd; font-size: 13.500px; }
  .chat i { width: 1px; height: 23px; background: #858585; margin-left: 7px; }
  .chat span { margin: -1px 0 0 9.500px; width: 79.500px; font-family: 'Noto Sans CJK SC', sans-serif; letter-spacing: .1px; }
  .chat span + i { margin: 0 13px 0 7px; }

  .dock { position: absolute; left: 29px; top: 926px; width: 1440px; height: 40px; border-radius: 9px; border-top: 1px solid #3c3c38; background: linear-gradient(90deg, #535450, #58574f 24%, #7a6a50 32%, #6c6352 50%, #5c5b50 70%, #55564e); display: flex; padding-left: 2.500px; font-family: Inter, sans-serif; }
  .dock span { width: 33.790px; height: 25px; flex: none; overflow: hidden; }
  .dock > i { width: 1px; height: 22px; background: #33342f; margin: 5px 6px 0 9px; }
  .dock :global(.tilt) { transform: rotate(-6deg); }
  .handle { position: absolute; left: 656px; top: 966px; width: 50px; height: 6px; border-radius: 3px; background: #dcdce0; }
</style>
